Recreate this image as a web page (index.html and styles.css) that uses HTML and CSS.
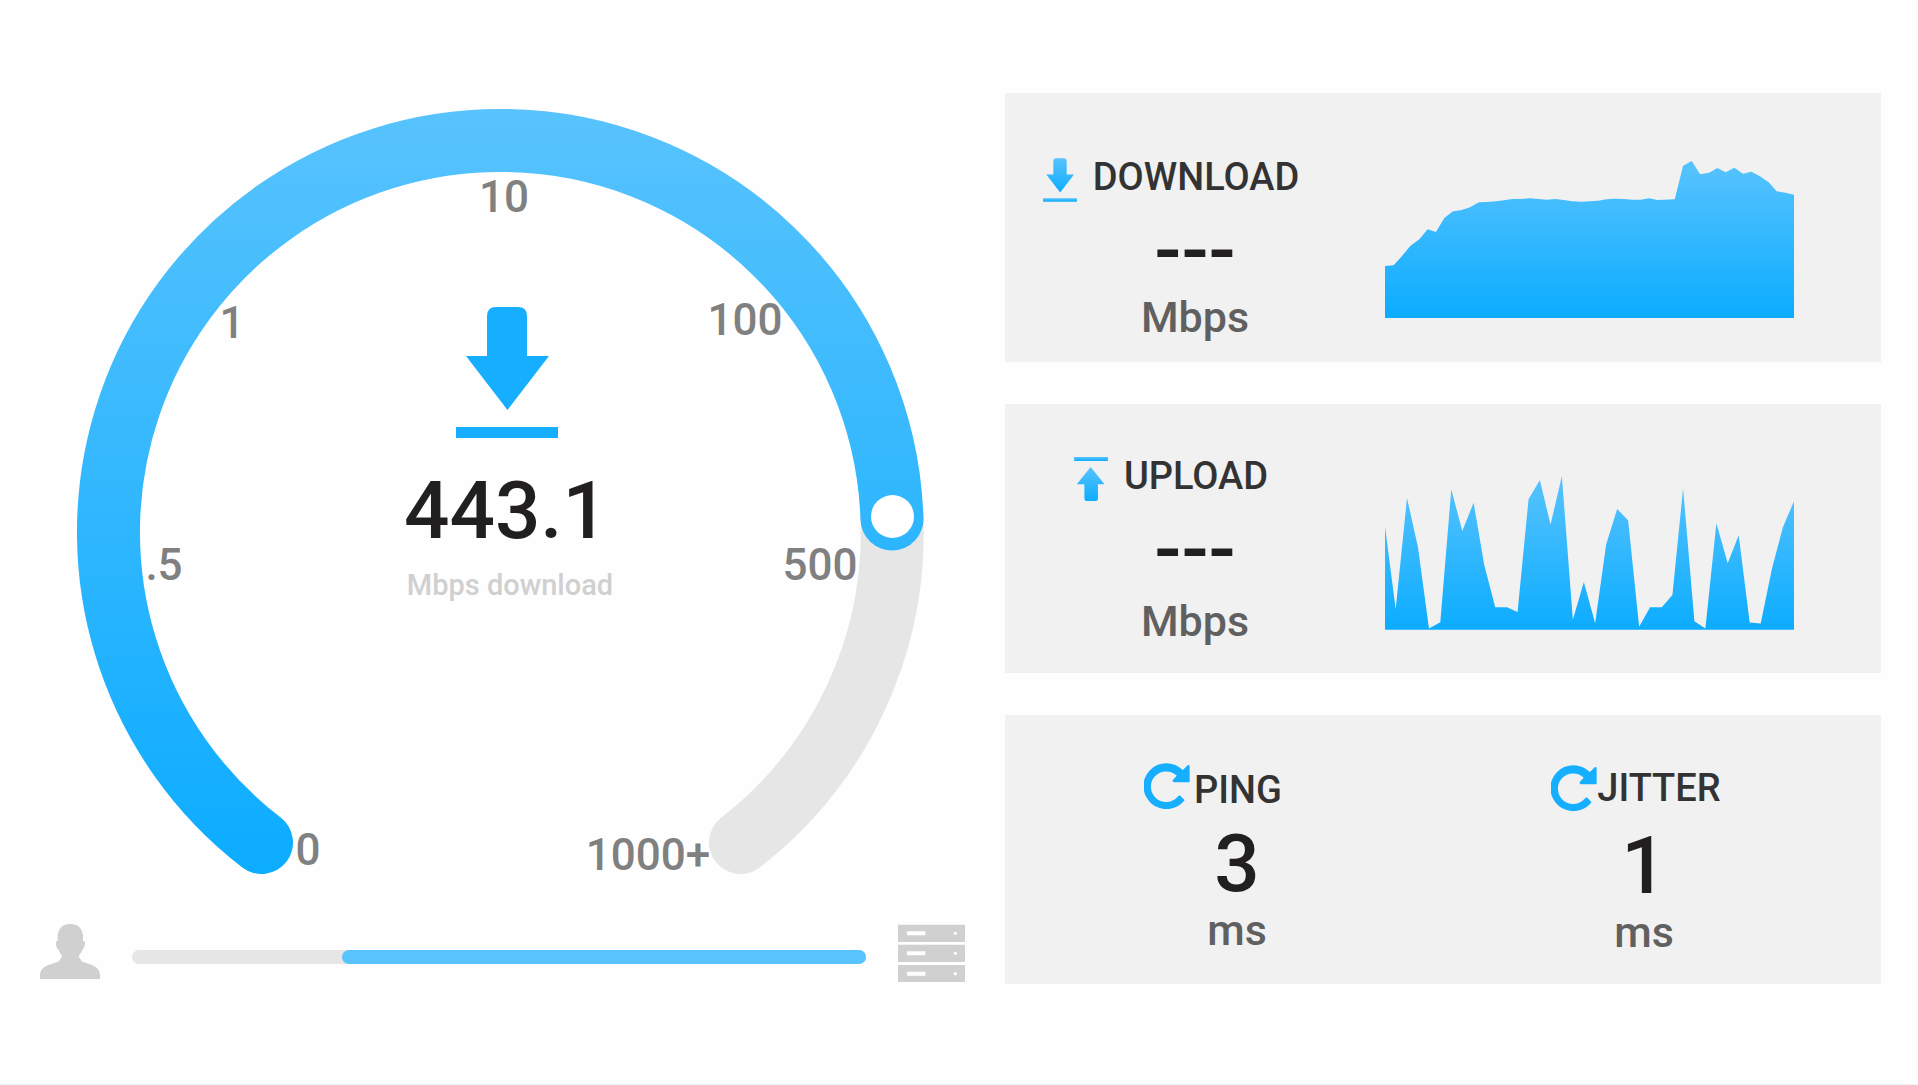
FILE: index.html
```html
<!DOCTYPE html>
<html lang="en">
<head>
<meta charset="utf-8">
<meta name="viewport" content="width=device-width, initial-scale=1">
<title>Speed test</title>
<link rel="stylesheet" href="styles.css">
</head>
<body>
<svg class="defs" aria-hidden="true">
  <defs>
    <linearGradient id="blue" x1="0" y1="0" x2="0" y2="1">
      <stop offset="0" stop-color="#58c3fd"/>
      <stop offset="1" stop-color="#0cacff"/>
    </linearGradient>
    <symbol id="arrow-down" viewBox="0 0 102 131">
      <path d="M31 49V9Q31 0 40 0H62Q71 0 71 9V49H93L51.500 103L10 49Z"/>
      <path d="M0 120H102V131H0Z"/>
    </symbol>
    <symbol id="arrow-up" viewBox="0 0 102 133">
      <path d="M0 0H102V12H0Z"/>
      <path d="M50 30L92 82H72V126Q72 133 65 133H38Q31 133 31 126V82H8Z"/>
    </symbol>
    <symbol id="refresh" viewBox="42 69 136 136">
      <path d="M177 79Q177 72 171 76L157 90A68 68 0 1 0 162 179L149 165Q145 164 142 168A45 45 0 1 1 139 107L128 118Q124 126 132 126H174Q177 126 177 123Z"/>
    </symbol>
  </defs>
</svg>

<main class="page">
  <section class="speed" aria-label="Current speed">
    <svg class="gauge" viewBox="77 109 847 766" role="img" aria-label="443.1 Mbps download">
      <defs>
        <linearGradient id="dial" gradientUnits="userSpaceOnUse" x1="0" y1="109" x2="0" y2="874">
          <stop offset="0" stop-color="#58c3fd"/>
          <stop offset="1" stop-color="#0cacff"/>
        </linearGradient>
      </defs>
      <path class="gauge-track" d="M892 519A391.500 391.500 0 0 1 740.500 842.500"/>
      <path class="gauge-fill" d="M261.500 842.500A391.500 391.500 0 0 1 500.500 140.500A391.500 391.500 0 0 1 892 519"/>
      <circle class="gauge-knob" cx="892.500" cy="516.500" r="21.500"/>
      <g class="gauge-tick">
        <text x="308" y="865">0</text>
        <text x="164" y="580">.5</text>
        <text x="232" y="338">1</text>
        <text x="504" y="212">10</text>
        <text x="745" y="335">100</text>
        <text x="820" y="580">500</text>
        <text x="648" y="870">1000+</text>
      </g>
      <use class="gauge-icon" href="#arrow-down" x="456" y="307" width="102" height="131"/>
      <text class="gauge-value" x="506" y="538">443.1</text>
      <text class="gauge-unit" x="510" y="595">Mbps download</text>
    </svg>

    <div class="transfer">
      <svg class="transfer-client" viewBox="30 72 180 198" aria-hidden="true">
        <path d="M30 237V224C31 208 41 200 57 194L80 187Q90 184 91 176L96 172Q96 165 90 158Q86 148 82 146Q76 136 78 124H83V106Q88 72 121 72Q154 72 159 106V124H165Q166 136 160 146Q157 148 153 158Q147 164 146 171L151 176Q152 183 160 186L185 194Q209 204 210 224V237Z"/>
      </svg>
      <div class="transfer-bar" role="progressbar" aria-label="Transfer"><div class="transfer-fill"></div></div>
      <svg class="transfer-server" viewBox="174 72 201 198" aria-hidden="true">
        <path d="M174 74H375V126H174ZM174 134H375V186H174ZM174 195H375V246H174Z"/>
        <path class="transfer-lights" d="M201 94H256V106H201ZM201 154H256V166H201ZM201 215H256V227H201Z"/>
        <g class="transfer-lights"><circle cx="346" cy="100" r="5"/><circle cx="346" cy="160" r="5"/><circle cx="346" cy="221" r="5"/></g>
      </svg>
    </div>
  </section>

  <div class="results">
    <section class="card">
      <div class="metric metric--download">
        <h2 class="metric-title"><svg class="arrow-icon" aria-hidden="true"><use href="#arrow-down"/></svg>DOWNLOAD</h2>
        <p class="metric-value">---</p>
        <p class="metric-unit">Mbps</p>
      </div>
      <svg class="chart chart--download" viewBox="45 62 1228 472" role="img" aria-label="Download history">
        <path d="M45 534V377L71 375L96 347L121 317L148 297L173 267L198 275L223 233L248 214L275 209L300 201L327 186L352 185L378 183L402 180L427 176H452L480 174L505 176L530 178L557 176L582 179L607 183L634 184L660 183L685 181L710 177L737 175L762 176L787 178H812L838 174L863 179L915 177L940 76L966 62L991 102L1018 97L1043 83L1068 96L1094 82L1120 100L1145 94L1171 108L1197 126L1221 153L1247 157L1273 163V534Z"/>
      </svg>
    </section>

    <section class="card">
      <div class="metric metric--upload">
        <h2 class="metric-title"><svg class="arrow-icon" aria-hidden="true"><use href="#arrow-up"/></svg>UPLOAD</h2>
        <p class="metric-value">---</p>
        <p class="metric-unit">Mbps</p>
      </div>
      <svg class="chart chart--upload" viewBox="45 48 1228 462" role="img" aria-label="Upload history">
        <path d="M45 510V200L77 448L111 114L144 262L177 506L211 487L244 88L277 213L311 128L343 315L376 442H411L443 456L476 118L510 60L542 194L576 48L609 480L642 366L676 490L709 254L742 147L775 181L808 501L841 442H876L908 405L940 85L974 484L1007 506L1040 190L1074 310L1107 226L1140 488L1173 491L1207 326L1240 201L1273 124V510Z"/>
      </svg>
    </section>

    <section class="card card--latency">
      <div class="metric metric--ping">
        <h2 class="metric-title"><svg class="refresh-icon" aria-hidden="true"><use href="#refresh"/></svg>PING</h2>
        <p class="metric-value">3</p>
        <p class="metric-unit">ms</p>
      </div>
      <div class="metric metric--jitter">
        <h2 class="metric-title"><svg class="refresh-icon" aria-hidden="true"><use href="#refresh"/></svg>JITTER</h2>
        <p class="metric-value">1</p>
        <p class="metric-unit">ms</p>
      </div>
    </section>
  </div>
</main>
</body>
</html>
```

FILE: styles.css
```css
* {
  box-sizing: border-box;
}

body {
  margin: 0;
  min-height: 100vh;
  background: #fefefe;
  border-bottom: 1px solid #ecf5f5;
  color: #211f20;
  font-family: Roboto, "Liberation Sans", sans-serif;
  font-weight: 500;
}

.defs {
  position: absolute;
  width: 0;
  height: 0;
}

.page {
  display: grid;
  grid-template-columns: 1005fr 876fr;
  align-items: start;
  padding: 93px 37px 93px 0;
}

/* Gauge */
.speed {
  padding-top: 16px;
}

.gauge {
  display: block;
  width: 100%;
  padding: 0 81px 0 77px;
}

.gauge-track,
.gauge-fill {
  fill: none;
  stroke-width: 63px;
  stroke-linecap: round;
}

.gauge-track {
  stroke: #e6e6e6;
}

.gauge-fill {
  stroke: url(#dial);
}

.gauge-knob {
  fill: #fff;
}

.gauge text {
  text-anchor: middle;
}

.gauge-tick {
  fill: #808080;
  font-size: 44px;
}

.gauge-icon {
  fill: #16afff;
}

.gauge-value {
  fill: #211f20;
  font-size: 80px;
}

.gauge-unit {
  fill: #d0d0d0;
  font-size: 29px;
}

/* Transfer between client and server */
.transfer {
  display: flex;
  align-items: center;
  gap: 32px;
  padding: 0 40px;
  margin-top: 49px;
}

.transfer-client,
.transfer-server {
  flex: none;
  height: 66px;
  fill: #d0d0d0;
}

.transfer-client {
  width: 60px;
}

.transfer-server {
  width: 67px;
}

.transfer-lights {
  fill: #fff;
}

.transfer-bar {
  flex: 1;
  height: 14px;
  border-radius: 7px;
  background: #e6e6e6;
}

.transfer-fill {
  width: 524px;
  max-width: 100%;
  height: 100%;
  margin-left: auto;
  border-radius: 7px;
  background: #58c3fd;
}

/* Result cards */
.results {
  display: grid;
  gap: 42px;
}

.card {
  display: grid;
  grid-template-columns: 380fr 409fr 87fr;
  align-items: start;
  min-height: 269px;
  background: #f1f1f1;
}

.card--latency {
  grid-template-columns: 464fr 350fr 62fr;
}

.metric {
  text-align: center;
}

.metric--download {
  padding-top: 65px;
}

.metric--upload {
  padding-top: 53px;
}

.metric--ping {
  padding-top: 48px;
}

.metric--jitter {
  padding-top: 50px;
}

.metric-title {
  display: flex;
  justify-content: center;
  align-items: flex-start;
  gap: 16px;
  margin: 0;
  padding-right: 48px;
  color: #333;
  font-size: 38px;
  font-weight: 500;
  line-height: 38px;
}

.metric--ping .metric-title {
  align-items: flex-end;
  gap: 4px;
}

.metric--jitter .metric-title {
  align-items: center;
  gap: 0;
  padding-right: 16px;
}

.arrow-icon {
  width: 34px;
  height: 44px;
  fill: url(#blue);
}

.refresh-icon {
  width: 46px;
  height: 46px;
  fill: #16afff;
}

.metric-value {
  margin: 9px 0 0;
  font-size: 80px;
  line-height: 80px;
}

.metric-unit {
  margin: 2px 0 0;
  color: #606060;
  font-size: 43px;
  line-height: 48px;
}

.metric--upload .metric-unit {
  margin-top: 7px;
}

.card--latency .metric-value {
  margin-top: 15px;
}

.chart {
  display: block;
  width: 100%;
  fill: url(#blue);
}

.chart--download {
  margin-top: 68px;
}

.chart--upload {
  margin-top: 72px;
}
```
